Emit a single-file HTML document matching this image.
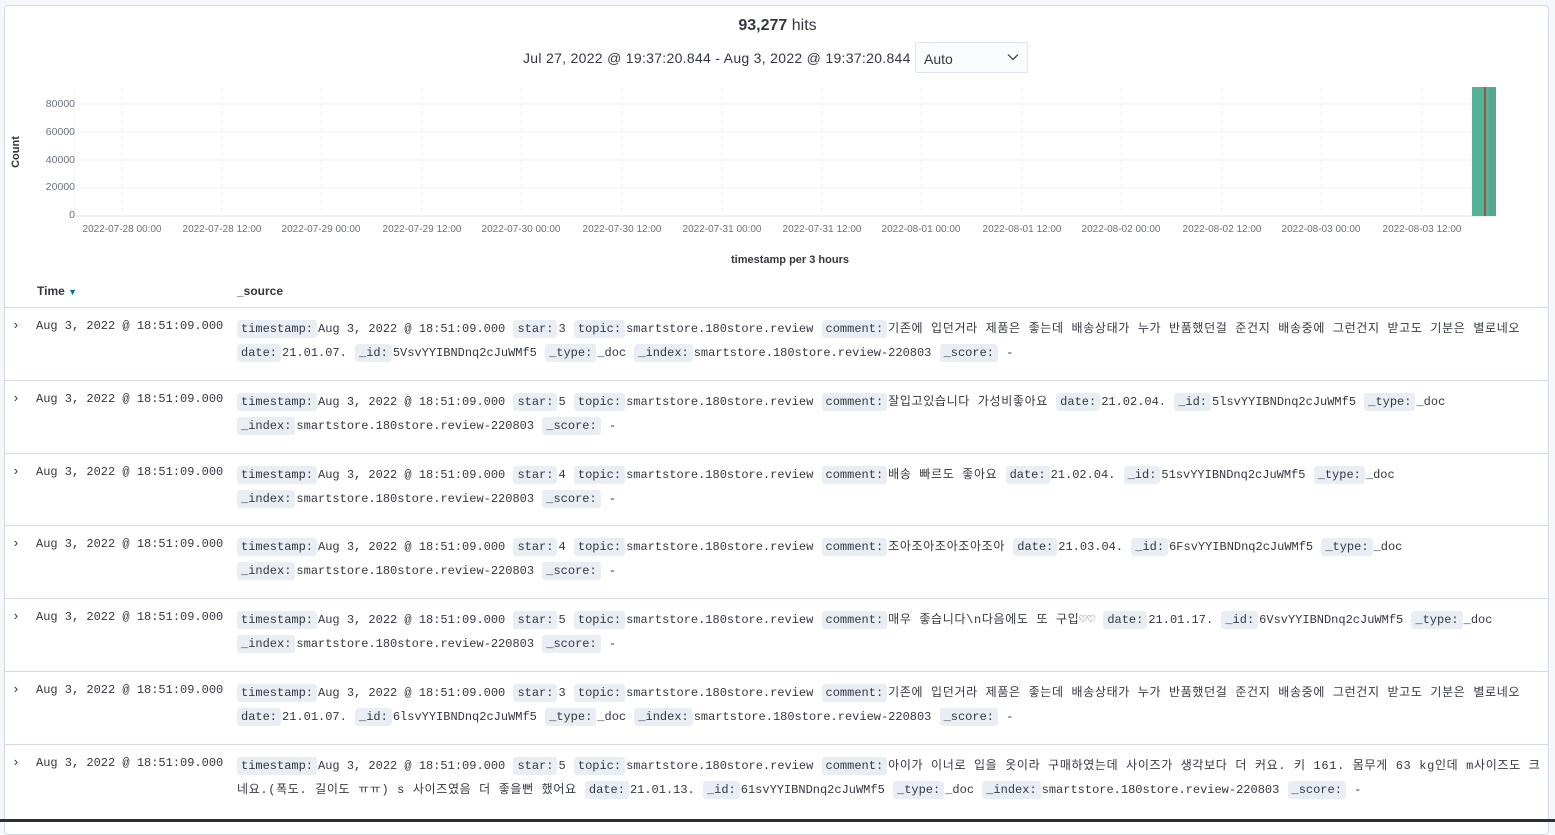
<!DOCTYPE html>
<html><head><meta charset="utf-8"><style>
*{margin:0;padding:0;box-sizing:border-box}
body{width:1555px;height:822px;background:#f5f7fa;position:relative;overflow:hidden;font-family:"Liberation Sans","Noto Sans CJK KR",sans-serif;color:#343741}
.panel{position:absolute;left:4px;top:5px;width:1545px;height:830px;background:#fff;border:1px solid #d3dae6;border-radius:4px}
.abs{position:absolute}
.mono{font-family:"Liberation Mono","DejaVu Sans Mono","Noto Sans CJK KR",monospace;font-size:12px;color:#343741}
.row{position:absolute;left:0;width:1545px;border-top:1px solid #d3dae6;height:73px}
.row .chev{position:absolute;left:8px;top:10px;font-size:13px;color:#343741}
.row .t{position:absolute;left:32px;top:11px;white-space:nowrap}
.row .s{position:absolute;left:233px;top:9px;line-height:24px;white-space:nowrap}
.k{background:#e9eef5;border-radius:3px;padding:2px 4px;margin-right:1px}
.v{margin-right:1px}
.c{letter-spacing:0.65px}
.yl{position:absolute;right:1480px;font-size:10.5px;color:#69707d;text-align:right}
.xl{position:absolute;top:224px;font-size:10px;color:#69707d;white-space:nowrap;transform:translateX(-50%)}
</style></head><body>
<div class="panel"></div>
<div class="abs" style="left:0;width:1555px;top:17px;text-align:center;font-size:16px"><b>93,277</b> hits</div>
<div class="abs" style="left:523px;top:50px;font-size:14px;letter-spacing:0.3px">Jul 27, 2022 @ 19:37:20.844 - Aug 3, 2022 @ 19:37:20.844</div>
<div class="abs" style="left:915px;top:42px;width:113px;height:31px;border:1px solid #e0e5ee;background:#fbfcfd;border-radius:2px;font-size:14px;padding:8px 0 0 8px">Auto
<svg style="position:absolute;right:8px;top:10px" width="12" height="8" viewBox="0 0 12 8"><path d="M1 1.5 6 6.5 11 1.5" fill="none" stroke="#343741" stroke-width="1.2"/></svg></div>
<div class="abs" style="left:10px;transform:rotate(-90deg);transform-origin:0 0;font-size:11px;font-weight:bold;width:60px;text-align:center;top:182px">Count</div>
<svg class="abs" style="left:0;top:0" width="1555" height="240">
<g stroke="#eef0f3" stroke-width="1">
<line x1="80" y1="104" x2="1495" y2="104"/><line x1="80" y1="132" x2="1495" y2="132"/><line x1="80" y1="160" x2="1495" y2="160"/><line x1="80" y1="188" x2="1495" y2="188"/>
</g>
<g stroke="#eef0f3" stroke-dasharray="4,4">
<line x1="122" y1="88" x2="122" y2="215"/><line x1="222" y1="88" x2="222" y2="215"/><line x1="321" y1="88" x2="321" y2="215"/><line x1="422" y1="88" x2="422" y2="215"/><line x1="521" y1="88" x2="521" y2="215"/><line x1="622" y1="88" x2="622" y2="215"/><line x1="722" y1="88" x2="722" y2="215"/><line x1="822" y1="88" x2="822" y2="215"/><line x1="921" y1="88" x2="921" y2="215"/><line x1="1022" y1="88" x2="1022" y2="215"/><line x1="1121" y1="88" x2="1121" y2="215"/><line x1="1222" y1="88" x2="1222" y2="215"/><line x1="1321" y1="88" x2="1321" y2="215"/><line x1="1422" y1="88" x2="1422" y2="215"/>
</g>
<line x1="74" y1="88" x2="74" y2="216" stroke="#eef0f3"/>
<line x1="74" y1="216" x2="1495" y2="216" stroke="#eef0f3" stroke-width="2"/>
<rect x="1472" y="87" width="24" height="129" fill="#54b399"/>
<rect x="1489" y="87" width="7" height="129" fill="#5aa58f"/>
<rect x="1484" y="87" width="2" height="129" fill="#a0524a"/>
</svg>
<div class="yl" style="top:98px">80000</div><div class="yl" style="top:126px">60000</div><div class="yl" style="top:154px">40000</div><div class="yl" style="top:181px">20000</div><div class="yl" style="top:209px">0</div>
<div class="xl" style="left:122px">2022-07-28 00:00</div><div class="xl" style="left:222px">2022-07-28 12:00</div><div class="xl" style="left:321px">2022-07-29 00:00</div><div class="xl" style="left:422px">2022-07-29 12:00</div><div class="xl" style="left:521px">2022-07-30 00:00</div><div class="xl" style="left:622px">2022-07-30 12:00</div><div class="xl" style="left:722px">2022-07-31 00:00</div><div class="xl" style="left:822px">2022-07-31 12:00</div><div class="xl" style="left:921px">2022-08-01 00:00</div><div class="xl" style="left:1022px">2022-08-01 12:00</div><div class="xl" style="left:1121px">2022-08-02 00:00</div><div class="xl" style="left:1222px">2022-08-02 12:00</div><div class="xl" style="left:1321px">2022-08-03 00:00</div><div class="xl" style="left:1422px">2022-08-03 12:00</div>
<div class="abs" style="left:0;width:1580px;top:254px;text-align:center;font-size:11px;font-weight:bold">timestamp per 3 hours</div>
<div class="abs" style="left:37px;top:284px;font-size:12px;font-weight:bold">Time <span style="color:#006bb4;font-size:9px">▼</span></div>
<div class="abs" style="left:237px;top:284px;font-size:12px;font-weight:bold">_source</div>

<div class="abs" style="left:4px;top:0;width:1545px;height:822px">
<div class="row mono" style="top:307px"><span class="chev">›</span><span class="t">Aug 3, 2022 @ 18:51:09.000</span><div class="s">
<span class="k">timestamp:</span><span class="v">Aug 3, 2022 @ 18:51:09.000</span> <span class="k">star:</span><span class="v">3</span> <span class="k">topic:</span><span class="v">smartstore.180store.review</span> <span class="k">comment:</span><span class="v c">기존에 입던거라 제품은 좋는데 배송상태가 누가 반품했던걸 준건지 배송중에 그런건지 받고도 기분은 별로네오</span><br>
<span class="k">date:</span><span class="v">21.01.07.</span> <span class="k">_id:</span><span class="v">5VsvYYIBNDnq2cJuWMf5</span> <span class="k">_type:</span><span class="v">_doc</span> <span class="k">_index:</span><span class="v">smartstore.180store.review-220803</span> <span class="k">_score:</span><span class="v"> -</span></div></div>

<div class="row mono" style="top:380px"><span class="chev">›</span><span class="t">Aug 3, 2022 @ 18:51:09.000</span><div class="s">
<span class="k">timestamp:</span><span class="v">Aug 3, 2022 @ 18:51:09.000</span> <span class="k">star:</span><span class="v">5</span> <span class="k">topic:</span><span class="v">smartstore.180store.review</span> <span class="k">comment:</span><span class="v c">잘입고있습니다 가성비좋아요</span> <span class="k">date:</span><span class="v">21.02.04.</span> <span class="k">_id:</span><span class="v">5lsvYYIBNDnq2cJuWMf5</span> <span class="k">_type:</span><span class="v">_doc</span><br>
<span class="k">_index:</span><span class="v">smartstore.180store.review-220803</span> <span class="k">_score:</span><span class="v"> -</span></div></div>

<div class="row mono" style="top:453px"><span class="chev">›</span><span class="t">Aug 3, 2022 @ 18:51:09.000</span><div class="s">
<span class="k">timestamp:</span><span class="v">Aug 3, 2022 @ 18:51:09.000</span> <span class="k">star:</span><span class="v">4</span> <span class="k">topic:</span><span class="v">smartstore.180store.review</span> <span class="k">comment:</span><span class="v c">배송 빠르도 좋아요</span> <span class="k">date:</span><span class="v">21.02.04.</span> <span class="k">_id:</span><span class="v">51svYYIBNDnq2cJuWMf5</span> <span class="k">_type:</span><span class="v">_doc</span><br>
<span class="k">_index:</span><span class="v">smartstore.180store.review-220803</span> <span class="k">_score:</span><span class="v"> -</span></div></div>

<div class="row mono" style="top:525px"><span class="chev">›</span><span class="t">Aug 3, 2022 @ 18:51:09.000</span><div class="s">
<span class="k">timestamp:</span><span class="v">Aug 3, 2022 @ 18:51:09.000</span> <span class="k">star:</span><span class="v">4</span> <span class="k">topic:</span><span class="v">smartstore.180store.review</span> <span class="k">comment:</span><span class="v c">조아조아조아조아조아</span> <span class="k">date:</span><span class="v">21.03.04.</span> <span class="k">_id:</span><span class="v">6FsvYYIBNDnq2cJuWMf5</span> <span class="k">_type:</span><span class="v">_doc</span><br>
<span class="k">_index:</span><span class="v">smartstore.180store.review-220803</span> <span class="k">_score:</span><span class="v"> -</span></div></div>

<div class="row mono" style="top:598px"><span class="chev">›</span><span class="t">Aug 3, 2022 @ 18:51:09.000</span><div class="s">
<span class="k">timestamp:</span><span class="v">Aug 3, 2022 @ 18:51:09.000</span> <span class="k">star:</span><span class="v">5</span> <span class="k">topic:</span><span class="v">smartstore.180store.review</span> <span class="k">comment:</span><span class="v c">매우 좋습니다\n다음에도 또 구입♡♡</span> <span class="k">date:</span><span class="v">21.01.17.</span> <span class="k">_id:</span><span class="v">6VsvYYIBNDnq2cJuWMf5</span> <span class="k">_type:</span><span class="v">_doc</span><br>
<span class="k">_index:</span><span class="v">smartstore.180store.review-220803</span> <span class="k">_score:</span><span class="v"> -</span></div></div>

<div class="row mono" style="top:671px"><span class="chev">›</span><span class="t">Aug 3, 2022 @ 18:51:09.000</span><div class="s">
<span class="k">timestamp:</span><span class="v">Aug 3, 2022 @ 18:51:09.000</span> <span class="k">star:</span><span class="v">3</span> <span class="k">topic:</span><span class="v">smartstore.180store.review</span> <span class="k">comment:</span><span class="v c">기존에 입던거라 제품은 좋는데 배송상태가 누가 반품했던걸 준건지 배송중에 그런건지 받고도 기분은 별로네오</span><br>
<span class="k">date:</span><span class="v">21.01.07.</span> <span class="k">_id:</span><span class="v">6lsvYYIBNDnq2cJuWMf5</span> <span class="k">_type:</span><span class="v">_doc</span> <span class="k">_index:</span><span class="v">smartstore.180store.review-220803</span> <span class="k">_score:</span><span class="v"> -</span></div></div>

<div class="row mono" style="top:744px"><span class="chev">›</span><span class="t">Aug 3, 2022 @ 18:51:09.000</span><div class="s">
<span class="k">timestamp:</span><span class="v">Aug 3, 2022 @ 18:51:09.000</span> <span class="k">star:</span><span class="v">5</span> <span class="k">topic:</span><span class="v">smartstore.180store.review</span> <span class="k">comment:</span><span class="v c">아이가 이너로 입을 옷이라 구매하였는데 사이즈가 생각보다 더 커요. 키 161. 몸무게 63 kg인데 m사이즈도 크</span><br>
<span class="v c">네요.(폭도. 길이도 ㅠㅠ) s 사이즈였음 더 좋을뻔 했어요</span> <span class="k">date:</span><span class="v">21.01.13.</span> <span class="k">_id:</span><span class="v">61svYYIBNDnq2cJuWMf5</span> <span class="k">_type:</span><span class="v">_doc</span> <span class="k">_index:</span><span class="v">smartstore.180store.review-220803</span> <span class="k">_score:</span><span class="v"> -</span></div></div>
</div>
<div class="abs" style="left:0;top:819px;width:1555px;height:3px;background:#2b2f36"></div>
</body></html>
